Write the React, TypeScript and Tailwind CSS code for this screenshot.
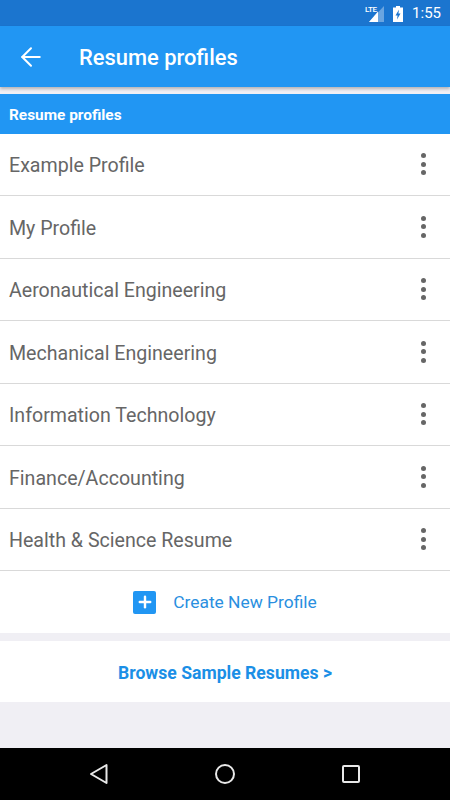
import { ArrowLeft, Plus } from 'lucide-react'

const profiles = [
  'Example Profile',
  'My Profile',
  'Aeronautical Engineering',
  'Mechanical Engineering',
  'Information Technology',
  'Finance/Accounting',
  'Health & Science Resume',
]

function StatusIcons() {
  return (
    <div className="flex h-[26px] items-center justify-end bg-[#1b75cf] pr-[9px] pt-[1px] text-white">
      <div className="relative h-[16px] w-[15px]">
        <svg viewBox="0 0 15 16" className="h-[16px] w-[15px]">
          <path d="M15 0V16H0Z" fill="#ffffff" opacity="0.35" />
          <path d="M9 5.6V16H0Z" fill="#ffffff" />
        </svg>
        <span className="absolute left-[-4px] top-[-1px] text-[8px] leading-[9px] font-medium tracking-[-0.4px]">LTE</span>
      </div>
      <svg viewBox="0 0 10 16" className="ml-[9px] h-[16px] w-[10px]">
        <path d="M3 0H7V1.5H10V16H0V1.5H3Z" fill="#ffffff" />
        <path d="M6 3.5L2.5 9.5H4.6L4 13.5L7.5 7.5H5.4Z" fill="#1b75cf" />
      </svg>
      <span className="ml-[9px] text-[15px] leading-none">1:55</span>
    </div>
  )
}

function MoreDots() {
  return (
    <div className="flex flex-col gap-[3.5px]">
      <span className="size-[5px] rounded-full bg-[#666666]" />
      <span className="size-[5px] rounded-full bg-[#666666]" />
      <span className="size-[5px] rounded-full bg-[#666666]" />
    </div>
  )
}

export default function App() {
  return (
    <div className="flex h-[800px] w-[450px] flex-col overflow-hidden bg-[#f0eff4] font-[Roboto,sans-serif]">
      <StatusIcons />
      <header className="flex h-[61px] items-center bg-[#2196f3] text-white shadow-[0_2px_3px_rgba(0,0,0,0.25)]">
        <ArrowLeft className="ml-[16px] size-[30px]" strokeWidth={1.6} />
        <h1 className="ml-[33px] pt-[3px] text-[21.9px] font-medium">Resume profiles</h1>
      </header>
      <div className="mt-[7px] flex h-[39.5px] items-center bg-[#2196f3] pl-[9px] pt-[3px] text-[15.4px] font-bold text-white">
        Resume profiles
      </div>
      <ul className="bg-white">
        {profiles.map((name) => (
          <li
            key={name}
            className="flex h-[62.5px] items-center justify-between border-b border-[#d9d9d9] pl-[9px] pr-[24px] text-[19.6px] text-[#666666]"
          >
            <span className="pt-[3px]">{name}</span>
            <MoreDots />
          </li>
        ))}
      </ul>
      <div className="flex h-[62px] items-center justify-center bg-white">
        <span className="flex size-[23px] items-center justify-center rounded-[2px] bg-[#2196f3] text-white">
          <Plus className="size-[18px] shrink-0" strokeWidth={3.2} />
        </span>
        <span className="ml-[17px] pt-[1px] text-[17.4px] text-[#2a8fe0]">Create New Profile</span>
      </div>
      <div className="mt-[8px] flex h-[61px] items-center justify-center bg-white pt-[3px] text-[17.6px] font-bold text-[#1b8fe6]">
        Browse Sample Resumes &gt;
      </div>
      <div className="flex-1" />
      <nav className="flex h-[52px] items-center bg-black">
        <svg viewBox="0 0 20 22" className="ml-[89px] h-[22px] w-[20px]" fill="none" stroke="#e8e8e8" strokeWidth="2" strokeLinejoin="round">
          <path d="M17.5 2V20L2 11Z" />
        </svg>
        <svg viewBox="0 0 22 22" className="ml-[105px] size-[22px]" fill="none" stroke="#e8e8e8" strokeWidth="2">
          <circle cx="11" cy="11" r="9" />
        </svg>
        <svg viewBox="0 0 20 20" className="ml-[105px] size-[20px]" fill="none" stroke="#e8e8e8" strokeWidth="2" strokeLinejoin="round">
          <rect x="2" y="2" width="16" height="16" rx="1" />
        </svg>
      </nav>
    </div>
  )
}
